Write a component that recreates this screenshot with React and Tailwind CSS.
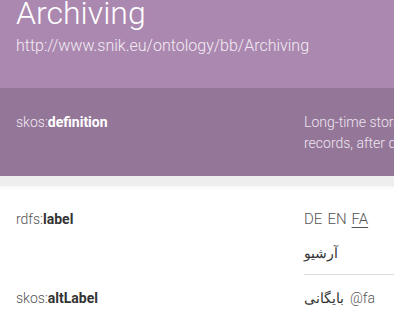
import React from 'react';

// Ontology resource page: header, definition band and property rows
export default function App() {
    return (
        <div className="w-[394px] h-[319px] overflow-hidden bg-white font-['Roboto',sans-serif]">
            <header className="bg-[#ab88b0] px-4 h-[88px] flex flex-col">
                <h1 className="-mt-[7px] text-[32px] leading-[40px] font-light text-white whitespace-nowrap">Archiving</h1>
                <p className="mt-[1px] text-[16px] leading-[24px] font-light text-[#f3ecf4] whitespace-nowrap">
                    http://www.snik.eu/ontology/bb/Archiving
                </p>
            </header>

            <section className="bg-[#947698] pt-6 pb-[22px] flex text-[14px] leading-[21px]">
                <div className="w-[304px] shrink-0 pl-4 text-[#f1e9f2]">
                    <span className="font-light">skos:</span>
                    <span className="font-bold text-white">definition</span>
                </div>
                <div className="w-[206px] shrink-0 font-light text-[#efe5f0]">
                    Long-time storage of patient records, after discharge.
                </div>
            </section>

            <div className="h-[10px] bg-[#eeeeee]" />
            <div className="h-[4px] bg-gradient-to-b from-[#f7f7f7] to-white" />

            <section className="pt-[19px] text-[14px] leading-[21px]">
                {/* rdfs:label row */}
                <div className="flex">
                    <div className="w-[304px] shrink-0 pl-4 text-[#555]">
                        <span className="font-light">rdfs:</span>
                        <span className="font-bold text-[#333]">label</span>
                    </div>
                    <div className="flex-1">
                        <div className="flex gap-[5px] text-[15px] font-light text-[#555] whitespace-nowrap">
                            <span>DE</span>
                            <span>EN</span>
                            <span className="underline underline-offset-[3px]">FA</span>
                        </div>
                        <div className="pt-[13px] pb-[10px] border-b border-[#dddddd] text-[#333]" lang="fa">
                            آرشیو
                        </div>
                    </div>
                </div>

                {/* skos:altLabel row */}
                <div className="flex pt-[13px]">
                    <div className="w-[304px] shrink-0 pl-4 text-[#555]">
                        <span className="font-light">skos:</span>
                        <span className="font-bold text-[#333]">altLabel</span>
                    </div>
                    <div className="flex-1 flex gap-[6px] whitespace-nowrap">
                        <span className="text-[#333]" lang="fa">بایگانی</span>
                        <span className="font-light text-[#555]">@fa</span>
                    </div>
                </div>
            </section>
        </div>
    );
}
